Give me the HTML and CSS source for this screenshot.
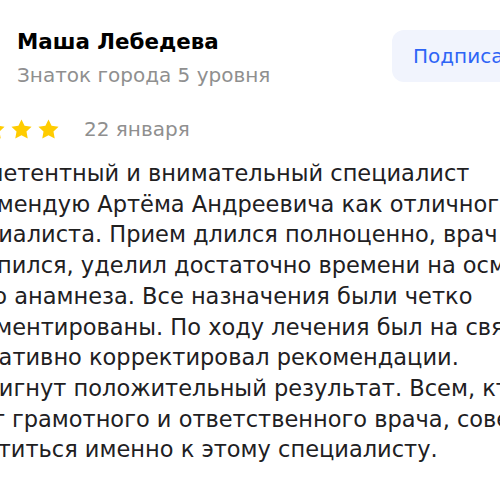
FILE: index.html
```html
<!DOCTYPE html>
<html lang="ru">
<head>
<meta charset="utf-8">
<link rel="stylesheet" href="styles.css">
</head>
<body>
<div class="review">
  <div class="header">
    <div class="avatar"></div>
    <div class="author">
      <div class="name">Маша Лебедева</div>
      <div class="level">Знаток города 5 уровня</div>
    </div>
    <button class="subscribe">Подписаться</button>
  </div>
  <div class="meta">
    <div class="stars">
      <svg class="star" viewBox="0 0 24 24"><path d="M12 1.5l3.2 6.6 7.3 1-5.3 5.1 1.3 7.2L12 18l-6.5 3.4 1.3-7.2L1.5 9.1l7.3-1z"/></svg>
      <svg class="star" viewBox="0 0 24 24"><path d="M12 1.5l3.2 6.6 7.3 1-5.3 5.1 1.3 7.2L12 18l-6.5 3.4 1.3-7.2L1.5 9.1l7.3-1z"/></svg>
      <svg class="star" viewBox="0 0 24 24"><path d="M12 1.5l3.2 6.6 7.3 1-5.3 5.1 1.3 7.2L12 18l-6.5 3.4 1.3-7.2L1.5 9.1l7.3-1z"/></svg>
      <svg class="star" viewBox="0 0 24 24"><path d="M12 1.5l3.2 6.6 7.3 1-5.3 5.1 1.3 7.2L12 18l-6.5 3.4 1.3-7.2L1.5 9.1l7.3-1z"/></svg>
      <svg class="star" viewBox="0 0 24 24"><path d="M12 1.5l3.2 6.6 7.3 1-5.3 5.1 1.3 7.2L12 18l-6.5 3.4 1.3-7.2L1.5 9.1l7.3-1z"/></svg>
    </div>
    <span class="date">22 января</span>
  </div>
  <p class="text">Компетентный и внимательный специалист<br>Рекомендую Артёма Андреевича как отличного<br>специалиста. Прием длился полноценно, врач не<br>торопился, уделил достаточно времени на осмотр и сбор<br>всего анамнеза. Все назначения были четко<br>аргументированы. По ходу лечения был на связи,<br>оперативно корректировал рекомендации.<br>Достигнут положительный результат. Всем, кто<br>ищет грамотного и ответственного врача, советую<br>обратиться именно к этому специалисту.</p>
</div>
</body>
</html>
```
FILE: styles.css
```css
html, body {
  margin: 0;
  padding: 0;
  background: #ffffff;
  overflow: hidden;
}
body {
  width: 500px;
  height: 500px;
  font-family: "DejaVu Sans", "Noto Sans", sans-serif;
  color: #21201f;
}
.review {
  margin-left: -58px;
  width: 700px;
  padding-top: 28px;
}
.header {
  display: flex;
  align-items: flex-start;
}
.avatar {
  width: 56px;
  height: 56px;
  border-radius: 50%;
  background: #e6e6e6;
  flex: none;
  margin-right: 19px;
}
.author {
  display: flex;
  flex-direction: column;
  gap: 7px;
  width: 375px;
  flex: none;
}
.name {
  font-size: 21.4px;
  line-height: 28px;
  font-weight: bold;
  color: #000;
}
.level {
  font-size: 20px;
  line-height: 24px;
  color: #8f8f8f;
}
.subscribe {
  margin-top: 2px;
  height: 52px;
  padding: 0 21px;
  border: none;
  border-radius: 12px;
  background: #f1f4fd;
  color: #2e64f6;
  font-family: inherit;
  font-size: 20px;
  font-weight: normal;
  white-space: nowrap;
}
.meta {
  display: flex;
  align-items: center;
  margin-top: 30px;
  height: 24px;
}
.stars {
  display: flex;
  gap: 4px;
  margin-left: -13px;
}
.star {
  width: 23px;
  height: 23px;
  fill: #fc0;
  display: block;
}
.date {
  margin-left: 24px;
  font-size: 20px;
  line-height: 24px;
  color: #8f8f8f;
}
.text {
  margin: 17px 0 0;
  font-size: 22.5px;
  line-height: 30.7px;
  white-space: nowrap;
}
```
